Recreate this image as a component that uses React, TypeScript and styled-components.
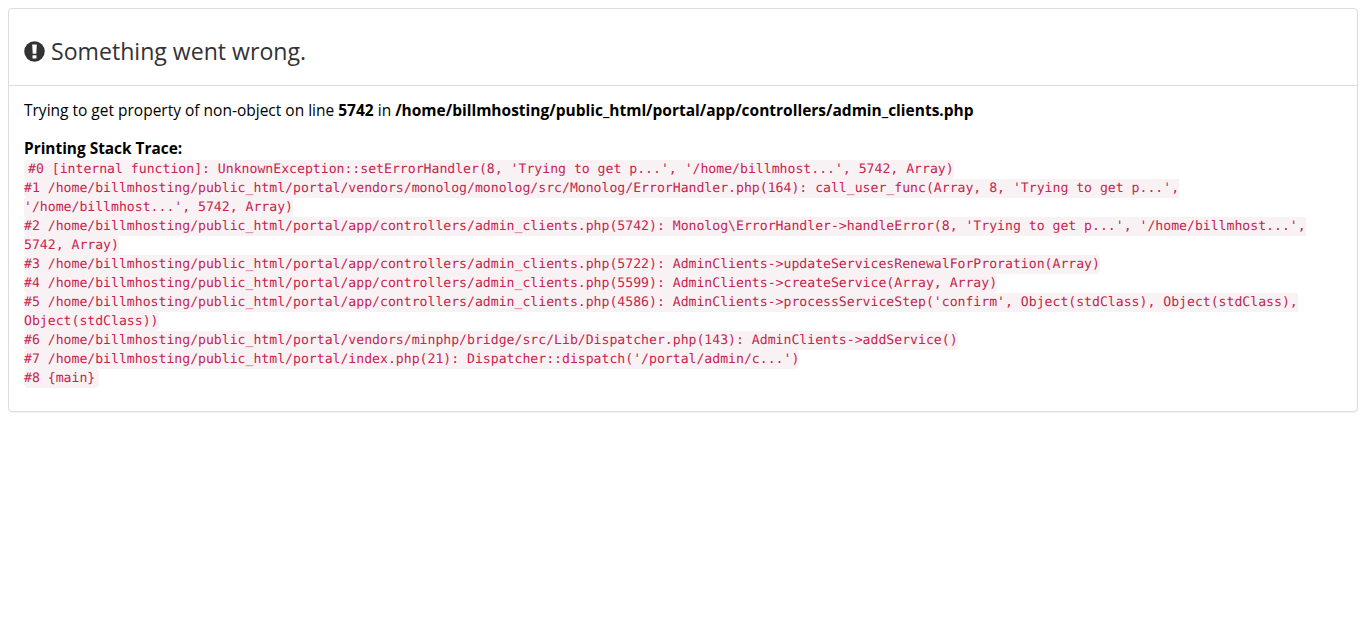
import React from 'react'
import styled, { createGlobalStyle } from 'styled-components'

const GlobalStyle = createGlobalStyle`
  html, body {
    margin: 0;
    background: #fff;
  }

  body {
    font-family: 'Open Sans', sans-serif;
    font-size: 15.5px;
    line-height: 20px;
    color: #000;
  }
`

const Page = styled.div`
  padding: 8px;
`

const Panel = styled.section`
  background: #fff;
  border: 1px solid #ddd;
  border-radius: 4px;
  box-shadow: 0 1px 1px rgba(0, 0, 0, 0.05);
`

const PanelHeader = styled.header`
  padding: 26px 15px 17px;
  border-bottom: 1px solid #ddd;
`

const Title = styled.h3`
  display: flex;
  align-items: center;
  gap: 6px;
  margin: 0;
  font-size: 23.1px;
  font-weight: 400;
  line-height: 33px;
  color: #333;
`

const AlertIcon = styled.svg`
  width: 21px;
  height: 21px;
  flex: none;
  margin-top: -1px;
`

const PanelBody = styled.div`
  padding: 14px 15px;
`

const Message = styled.p`
  margin: 0 0 19px;
`

const TraceTitle = styled.strong`
  display: block;
  font-size: 15.4px;
  line-height: 19px;
  margin-bottom: 2px;
`

const Trace = styled.div`
  font-family: 'DejaVu Sans Mono', monospace;
  font-size: 13.15px;
  line-height: 19px;
  text-rendering: geometricPrecision;
  padding-bottom: 9px;
`

const Code = styled.code`
  font-family: inherit;
  font-size: inherit;
  padding: 2px 0;
  color: #c7254e;
  background: #f9f2f4;
  border-radius: 4px;
`

const FirstCode = styled(Code)`
  padding-left: 4px;
`

const LastCode = styled(Code)`
  padding-right: 4px;
`

const traceLines = [
  "#1 /home/billmhosting/public_html/portal/vendors/monolog/monolog/src/Monolog/ErrorHandler.php(164): call_user_func(Array, 8, 'Trying to get p...', '/home/billmhost...', 5742, Array)",
  "#2 /home/billmhosting/public_html/portal/app/controllers/admin_clients.php(5742): Monolog\\ErrorHandler->handleError(8, 'Trying to get p...', '/home/billmhost...', 5742, Array)",
  '#3 /home/billmhosting/public_html/portal/app/controllers/admin_clients.php(5722): AdminClients->updateServicesRenewalForProration(Array)',
  '#4 /home/billmhosting/public_html/portal/app/controllers/admin_clients.php(5599): AdminClients->createService(Array, Array)',
  "#5 /home/billmhosting/public_html/portal/app/controllers/admin_clients.php(4586): AdminClients->processServiceStep('confirm', Object(stdClass), Object(stdClass), Object(stdClass))",
  '#6 /home/billmhosting/public_html/portal/vendors/minphp/bridge/src/Lib/Dispatcher.php(143): AdminClients->addService()',
  "#7 /home/billmhosting/public_html/portal/index.php(21): Dispatcher::dispatch('/portal/admin/c...')"
]

const App = (): JSX.Element => {
  return (
    <Page>
      <GlobalStyle />
      <Panel>
        <PanelHeader>
          <Title>
            <AlertIcon viewBox="0 0 21 21">
              <circle cx="10.5" cy="10.5" r="10.25" fill="#333" />
              <path d="M8.2 3.6h4.6l-.5 9.2H8.7z" fill="#fff" />
              <rect x="8.5" y="14.2" width="4" height="3.4" rx="0.4" fill="#fff" />
            </AlertIcon>
            Something went wrong.
          </Title>
        </PanelHeader>
        <PanelBody>
          <Message>
            Trying to get property of non-object on line <b>5742</b> in{' '}
            <b>/home/billmhosting/public_html/portal/app/controllers/admin_clients.php</b>
          </Message>
          <TraceTitle>Printing Stack Trace:</TraceTitle>
          <Trace>
            <FirstCode>
              #0 [internal function]: UnknownException::setErrorHandler(8, 'Trying to get p...', '/home/billmhost...', 5742, Array)
            </FirstCode>
            {traceLines.map((line) => (
              <React.Fragment key={line}>
                <br />
                <Code>{line}</Code>
              </React.Fragment>
            ))}
            <br />
            <LastCode>#8 {'{main}'}</LastCode>
          </Trace>
        </PanelBody>
      </Panel>
    </Page>
  )
}

export default App
